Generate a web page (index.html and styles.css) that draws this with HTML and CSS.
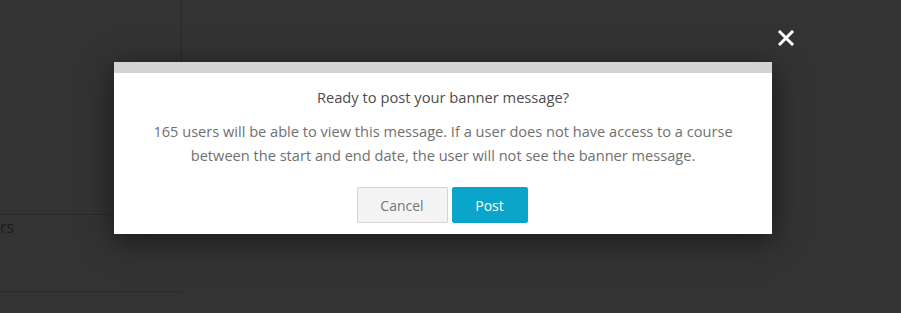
FILE: index.html
```html
<!DOCTYPE html>
<html>
<head>
<meta charset="utf-8">
<link rel="stylesheet" href="styles.css">
</head>
<body>
<div class="page">
  <div class="top">
    <div class="sidebar"></div>
  </div>
  <div class="row">
    <div class="row-text">rs</div>
  </div>
  <div class="row-bottom"></div>
</div>

<button class="close" aria-label="Close">
  <svg width="16" height="16" viewBox="0 0 16 16"><path d="M2 2 L14 14 M14 2 L2 14" stroke="#fff" stroke-width="3" stroke-linecap="square"/></svg>
</button>

<div class="modal">
  <div class="modal-bar"></div>
  <div class="modal-body">
    <p class="title">Ready to post your banner message?</p>
    <p class="text">165 users will be able to view this message. If a user does not have access to a course between the start and end date, the user will not see the banner message.</p>
    <div class="actions">
      <button class="btn btn-cancel">Cancel</button>
      <button class="btn btn-post">Post</button>
    </div>
  </div>
</div>
</body>
</html>
```
FILE: styles.css
```css
html, body {
  margin: 0;
  padding: 0;
  background: #333333;
  font-family: "Open Sans", "Liberation Sans", sans-serif;
  overflow: hidden;
}
.page {
  width: 901px;
  height: 313px;
}
.top {
  height: 214px;
  display: flex;
}
.sidebar {
  width: 181px;
  border-right: 1px solid #2b2b2b;
}
.row {
  height: 76px;
  border-top: 1px solid #2b2b2b;
  width: 300px;
}
.row-text {
  font-size: 16px;
  line-height: 20px;
  color: #1c1c1c;
  padding-top: 2px;
}
.row-bottom {
  width: 182px;
  border-top: 1px solid #2b2b2b;
}
.close {
  position: absolute;
  left: 778px;
  top: 30px;
  width: 16px;
  height: 16px;
  padding: 0;
  border: 0;
  background: none;
  display: flex;
}
.modal {
  position: absolute;
  left: 114px;
  top: 62px;
  width: 658px;
  height: 172px;
  background: #fff;
  box-shadow: 0 6px 28px rgba(0, 0, 0, 0.55);
}
.modal-bar {
  height: 11px;
  background: #d3d3d3;
}
.modal-body {
  padding: 14px 16px 11px;
  text-align: center;
}
.title {
  margin: 0;
  font-size: 14.7px;
  line-height: 20px;
  color: #4d4d4d;
}
.text {
  margin: 12px 0 0;
  font-size: 14.6px;
  line-height: 24px;
  color: #707070;
}
.actions {
  margin-top: 20px;
  padding-right: 2px;
  display: flex;
  justify-content: center;
  gap: 4px;
}
.btn {
  height: 36px;
  font-family: "Open Sans", "Liberation Sans", sans-serif;
  font-size: 14px;
  border-radius: 2px;
  padding: 0;
  cursor: pointer;
}
.btn-cancel {
  width: 91px;
  background: #f4f4f4;
  border: 1px solid #d4d4d4;
  color: #777;
}
.btn-post {
  width: 76px;
  background: #0aa5c8;
  border: 1px solid #0aa5c8;
  color: #fff;
}
```
